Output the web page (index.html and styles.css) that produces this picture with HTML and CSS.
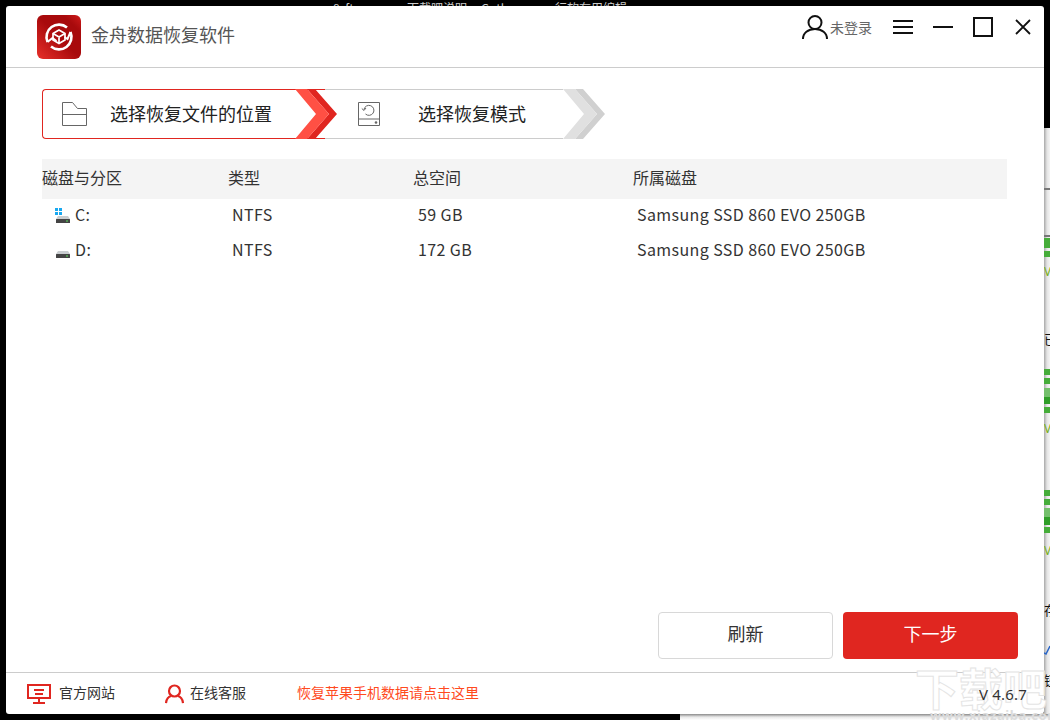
FILE: index.html
```html
<!DOCTYPE html>
<html lang="zh-CN">
<head>
<meta charset="utf-8">
<title>金舟数据恢复软件</title>
<link rel="stylesheet" href="styles.css">
</head>
<body>
<div class="desktop">
  <div class="top-scrap"><span class="s1">8sftp.exe</span><span class="s2">下载吧说明</span><span class="s3">Gotleap.exe</span><span class="s4">行软有用编辑</span></div>
  <div class="side-strip">
    <i class="line l1"></i><i class="line l2"></i>
    <i class="g g1"></i><i class="g g2"></i><b class="v v1">V</b>
    <span class="scrap c1">已</span>
    <i class="g g3"></i><i class="g g4"></i><i class="g g5 lt"></i><i class="g g6 dk"></i><i class="g g7"></i><b class="v v2">V</b>
    <i class="g g8"></i><i class="g g9"></i><i class="g g10 lt"></i><i class="g g11 dk"></i><i class="g g12"></i><b class="v v3">V</b>
    <span class="scrap c2">存</span>
    <svg class="tick" viewBox="0 0 6 10"><path d="M0 8l2 1 4-8" fill="none" stroke="#2a66c8" stroke-width="1.500"/></svg>
    <span class="scrap c3">钮</span>
  </div>
  <main class="window">
    <header class="titlebar">
      <svg class="logo" viewBox="0 0 44 44">
        <defs><linearGradient id="lg" x1="0" y1="1" x2="1" y2="0"><stop offset="0" stop-color="#e8302a"/><stop offset=".5" stop-color="#a80a0c"/><stop offset=".8" stop-color="#a80a0c"/><stop offset="1" stop-color="#d01c1c"/></linearGradient></defs>
        <rect width="44" height="44" rx="6" fill="url(#lg)"/>
        <path d="M10.500 27A12.500 12.500 0 0 1 30 12.500M33.500 17A12.500 12.500 0 0 1 14 31.500" fill="none" stroke="#fff" stroke-width="2.600"/>
        <path d="M10.500 27l5-4 4 3M33.500 17l-3 7-3-2" fill="none" stroke="#fff" stroke-width="2"/>
        <path d="M22 15l6 3.500v6.500l-6 3.500-6-3.500v-6.500zM16 18.500l6 3.500 6-3.500M22 22v6.500" fill="none" stroke="#fff" stroke-width="1.700"/>
      </svg>
      <h1 class="app-name">金舟数据恢复软件</h1>
      <div class="controls">
        <div class="user">
          <svg class="user-icon" viewBox="0 0 28 26"><circle cx="14" cy="8.500" r="6.500" fill="none" stroke="#111" stroke-width="2"/><path d="M2 25c0-6 5-10 12-10s12 4 12 10" fill="none" stroke="#111" stroke-width="2"/></svg>
          <span>未登录</span>
        </div>
        <svg class="win-btn menu" viewBox="0 0 20 14"><path d="M0 1h20M0 7h20M0 13h20" stroke="#111" stroke-width="2"/></svg>
        <svg class="win-btn min" viewBox="0 0 20 14"><path d="M0 7h20" stroke="#111" stroke-width="2"/></svg>
        <svg class="win-btn max" viewBox="0 0 20 20"><rect x="1" y="1" width="18" height="18" fill="none" stroke="#111" stroke-width="2"/></svg>
        <svg class="win-btn close" viewBox="0 0 16 16"><path d="M1 1l14 14M15 1L1 15" stroke="#111" stroke-width="1.800"/></svg>
      </div>
    </header>
    <section class="content">
      <nav class="steps">
        <div class="step step-active">
          <svg class="step-icon folder" viewBox="0 0 25 24"><path d="M.5 23.500V.5h10l5 6h9v17zM.5 12.500h24" fill="none" stroke="#666"/></svg>
          <span class="step-label">选择恢复文件的位置</span>
          <svg class="chev chev-red" viewBox="0 0 44 50"><path d="M12 0h8l22 25-22 25h-8l22-25z" fill="#e02620"/><path d="M0 0h12l22 25-22 25H0l21-25z" fill="#ff5044"/></svg>
        </div>
        <div class="step step-next">
          <svg class="step-icon disk" viewBox="0 0 23 24"><path d="M.5.5h21v23H.5zM.5 17h21" fill="none" stroke="#666"/><circle cx="18" cy="20.500" r="1.300" fill="#666"/><path d="M6 7.500a5 5 0 1 1 1.500 4.500M3.800 6.500L6 8.500 8 6" fill="none" stroke="#666"/></svg>
          <span class="step-label">选择恢复模式</span>
          <svg class="chev chev-grey" viewBox="0 0 44 50"><path d="M12 0h8l22 25-22 25h-8l22-25z" fill="#d0d0d0"/><path d="M0 0h12l22 25-22 25H0l21-25z" fill="#e0e0e0"/></svg>
        </div>
      </nav>
      <div class="table">
        <div class="row head"><span>磁盘与分区</span><span>类型</span><span>总空间</span><span>所属磁盘</span></div>
        <div class="row body-row">
          <span class="drive">
            <svg class="drive-icon" viewBox="0 0 16 15"><path fill="#18a8f0" d="M0 0h3v3H0zM4 0h3v3H4zM0 4h3v3H0zM4 4h3v3H4z"/><path fill="#c9cdd0" d="M3 8h10l2 3H1z"/><rect x="1" y="11" width="14" height="4" rx=".5" fill="#444"/><rect x="11" y="12.500" width="2" height="1" fill="#5be05b"/></svg>C:</span>
          <span>NTFS</span><span>59 GB</span><span>Samsung SSD 860 EVO 250GB</span>
        </div>
        <div class="row body-row">
          <span class="drive">
            <svg class="drive-icon" viewBox="0 0 16 15"><path fill="#c9cdd0" d="M3 8h10l2 3H1z"/><rect x="1" y="11" width="14" height="4" rx=".5" fill="#444"/><rect x="11" y="12.500" width="2" height="1" fill="#5be05b"/></svg>D:</span>
          <span>NTFS</span><span>172 GB</span><span>Samsung SSD 860 EVO 250GB</span>
        </div>
      </div>
      <div class="actions">
        <button class="btn btn-ghost">刷新</button>
        <button class="btn btn-primary">下一步</button>
      </div>
    </section>
    <footer class="footer">
      <a class="foot-link site"><svg class="foot-icon" viewBox="0 0 24 20"><path d="M1 1h22v13H1zM7 6h10M8 10h8M12 14v4M6 19h12" fill="none" stroke="#e02620" stroke-width="2"/></svg><span class="foot-text">官方网站</span></a>
      <a class="foot-link service"><svg class="foot-icon2" viewBox="0 0 19 20"><circle cx="9.500" cy="7" r="5.500" fill="none" stroke="#e02620" stroke-width="2.200"/><path d="M1 19c.5-4 3-6.500 5-7M18 19c-.5-4-3-6.500-5-7" fill="none" stroke="#e02620" stroke-width="2.200"/></svg><span class="foot-text">在线客服</span></a>
      <a class="foot-promo foot-text">恢复苹果手机数据请点击这里</a>
      <span class="version">V 4.6.7</span>
    </footer>
  </main>
  <div class="watermark">下载吧</div>
  <div class="wm-url">www.xiazaiba.com</div>
</div>
</body>
</html>
```
FILE: styles.css
```css
* { box-sizing: border-box; }
html, body { margin: 0; padding: 0; }
body { width: 1050px; height: 720px; overflow: hidden; background: #000; font-family: "Noto Sans CJK SC", "Noto Sans", sans-serif; color: #222; }
.desktop { position: relative; width: 1050px; height: 720px; overflow: hidden; padding: 6px; background: #000; }
.desktop::after { content: ""; position: absolute; left: 680px; top: 714px; width: 370px; height: 6px; background: linear-gradient(#8a8a8a, #e8e8e8 3px, #fff); }
.top-scrap { position: absolute; left: 0; top: 0; height: 6px; width: 1050px; overflow: hidden; font-size: 12px; line-height: 16px; color: #ccc; white-space: nowrap; }
.top-scrap span { position: absolute; top: 0; }
.s1 { left: 333px; } .s2 { left: 407px; } .s3 { left: 481px; } .s4 { left: 555px; }
.side-strip { position: absolute; left: 1044px; top: 0; width: 6px; height: 720px; overflow: hidden; background: linear-gradient(#000 128px, transparent 128px), linear-gradient(90deg, #a8a8a8, #e4e4e4 3px, #f4f4f4); }
.line { position: absolute; left: 0; width: 6px; height: 1px; background: #777; }
.l1 { top: 188px; height: 2px; } .l2 { top: 235px; height: 2px; }
.g { position: absolute; left: 0; width: 6px; background: #46ad3a; }
.g.lt { background: #74c06c; } .g.dk { background: #2f9e28; }
.g1 { top: 238px; height: 10px; } .g2 { top: 251px; height: 6px; }
.g3 { top: 369px; height: 6px; } .g4 { top: 378px; height: 6px; } .g5 { top: 388px; height: 9px; } .g6 { top: 397px; height: 7px; } .g7 { top: 407px; height: 6px; }
.g8 { top: 490px; height: 6px; } .g9 { top: 499px; height: 6px; } .g10 { top: 508px; height: 9px; } .g11 { top: 517px; height: 8px; } .g12 { top: 527px; height: 6px; }
.v { position: absolute; left: 0; font: 400 12px/14px "Noto Sans", sans-serif; color: #78b020; }
.v1 { top: 265px; } .v2 { top: 422px; } .v3 { top: 544px; }
.scrap { position: absolute; left: 0; font-size: 13px; line-height: 16px; color: #111; }
.c1 { top: 331px; } .c2 { top: 602px; } .c3 { top: 672px; }
.tick { position: absolute; left: 0; top: 645px; width: 6px; height: 10px; }
.window { position: relative; width: 1038px; height: 708px; background: #fff; display: flex; flex-direction: column; overflow: hidden; border-radius: 3px; }
.titlebar { height: 62px; flex: none; display: flex; align-items: center; border-bottom: 1px solid #ccc; padding-left: 31px; }
.logo { width: 44px; height: 44px; flex: none; }
.app-name { margin: 0 0 5px 10px; font-size: 18px; font-weight: 400; color: #555; line-height: 24px; }
.controls { margin-left: auto; margin-bottom: 19px; display: flex; align-items: center; }
.user { display: flex; align-items: center; font-size: 14px; line-height: 20px; color: #666; }
.user-icon { width: 28px; height: 26px; }
.user span { margin-left: 1px; }
.win-btn { flex: none; display: block; }
.menu { width: 20px; height: 14px; margin-left: 21px; }
.min { width: 20px; height: 14px; margin-left: 20px; }
.max { width: 20px; height: 20px; margin-left: 20px; }
.close { width: 16px; height: 16px; margin-left: 22px; margin-right: 13px; }
.content { flex: 1; display: flex; flex-direction: column; padding: 21px 26px 0 36px; }
.steps { display: flex; height: 50px; }
.step { position: relative; height: 50px; display: flex; align-items: center; }
.step-active { width: 283px; border: 1px solid #e02620; border-right: 0; border-radius: 4px 0 0 4px; padding-left: 19px; }
.step-next { width: 238px; border-top: 1px solid #ccc; border-bottom: 1px solid #ccc; }
.step-label { font-size: 18px; line-height: 24px; color: #222; margin-bottom: 2px; white-space: nowrap; }
.step-icon { flex: none; }
.folder { width: 25px; height: 24px; }
.step-active .step-label { margin-left: 23px; }
.disk { width: 23px; height: 24px; margin-left: 33px; }
.step-next .step-label { margin-left: 37px; }
.chev { position: absolute; top: -1px; width: 44px; height: 50px; }
.chev-red { left: 252px; z-index: 1; }
.chev-grey { left: 238px; }
.table { margin-top: 20px; width: 965px; font-size: 16px; }
.row { display: grid; grid-template-columns: 186px 185px 220px 1fr; align-items: center; padding-bottom: 5px; }
.head { height: 40px; background: #f4f4f4; color: #333; }
.body-row { height: 35px; color: #333; padding-left: 5px; letter-spacing: .4px; grid-template-columns: 185px 186px 219px 1fr; }
.drive { display: flex; align-items: center; padding-left: 8px; }
.drive-icon { width: 16px; height: 15px; margin-right: 4px; margin-top: 3px; }
.actions { margin-top: auto; margin-bottom: 13px; display: flex; justify-content: flex-end; gap: 10px; }
.btn { width: 175px; height: 47px; padding: 0 0 5px; font: 400 18px/24px "Noto Sans CJK SC", sans-serif; border-radius: 4px; cursor: pointer; }
.btn-ghost { background: #fff; border: 1px solid #d8d8d8; color: #333; }
.btn-primary { background: #e02620; border: 0; color: #fff; }
.footer { position: relative; height: 42px; flex: none; border-top: 1px solid #ccc; display: flex; align-items: center; font-size: 14px; line-height: 20px; padding-left: 21px; }
.foot-link { display: flex; align-items: center; color: #333; }
.foot-text { margin-bottom: 3px; }
.foot-icon { width: 24px; height: 20px; margin-right: 8px; }
.site { width: 138px; }
.foot-icon2 { width: 19px; height: 20px; margin-right: 6px; }
.service { width: 132px; }
.foot-promo { color: #ff4a1e; }
.version { position: absolute; right: 17px; top: 11px; z-index: 3; font: 15px/20px "Noto Sans", sans-serif; letter-spacing: .2px; color: #333; }
.watermark { position: absolute; left: 915px; top: 657px; z-index: 2; font-size: 44px; line-height: 60px; font-weight: 700; color: #fff; -webkit-text-stroke: 1px #e4e4e4; white-space: nowrap; }
.wm-url { position: absolute; left: 930px; top: 707px; z-index: 2; font: 700 13px/16px "Noto Sans", sans-serif; letter-spacing: .6px; color: #dcdcdc; white-space: nowrap; }
```
